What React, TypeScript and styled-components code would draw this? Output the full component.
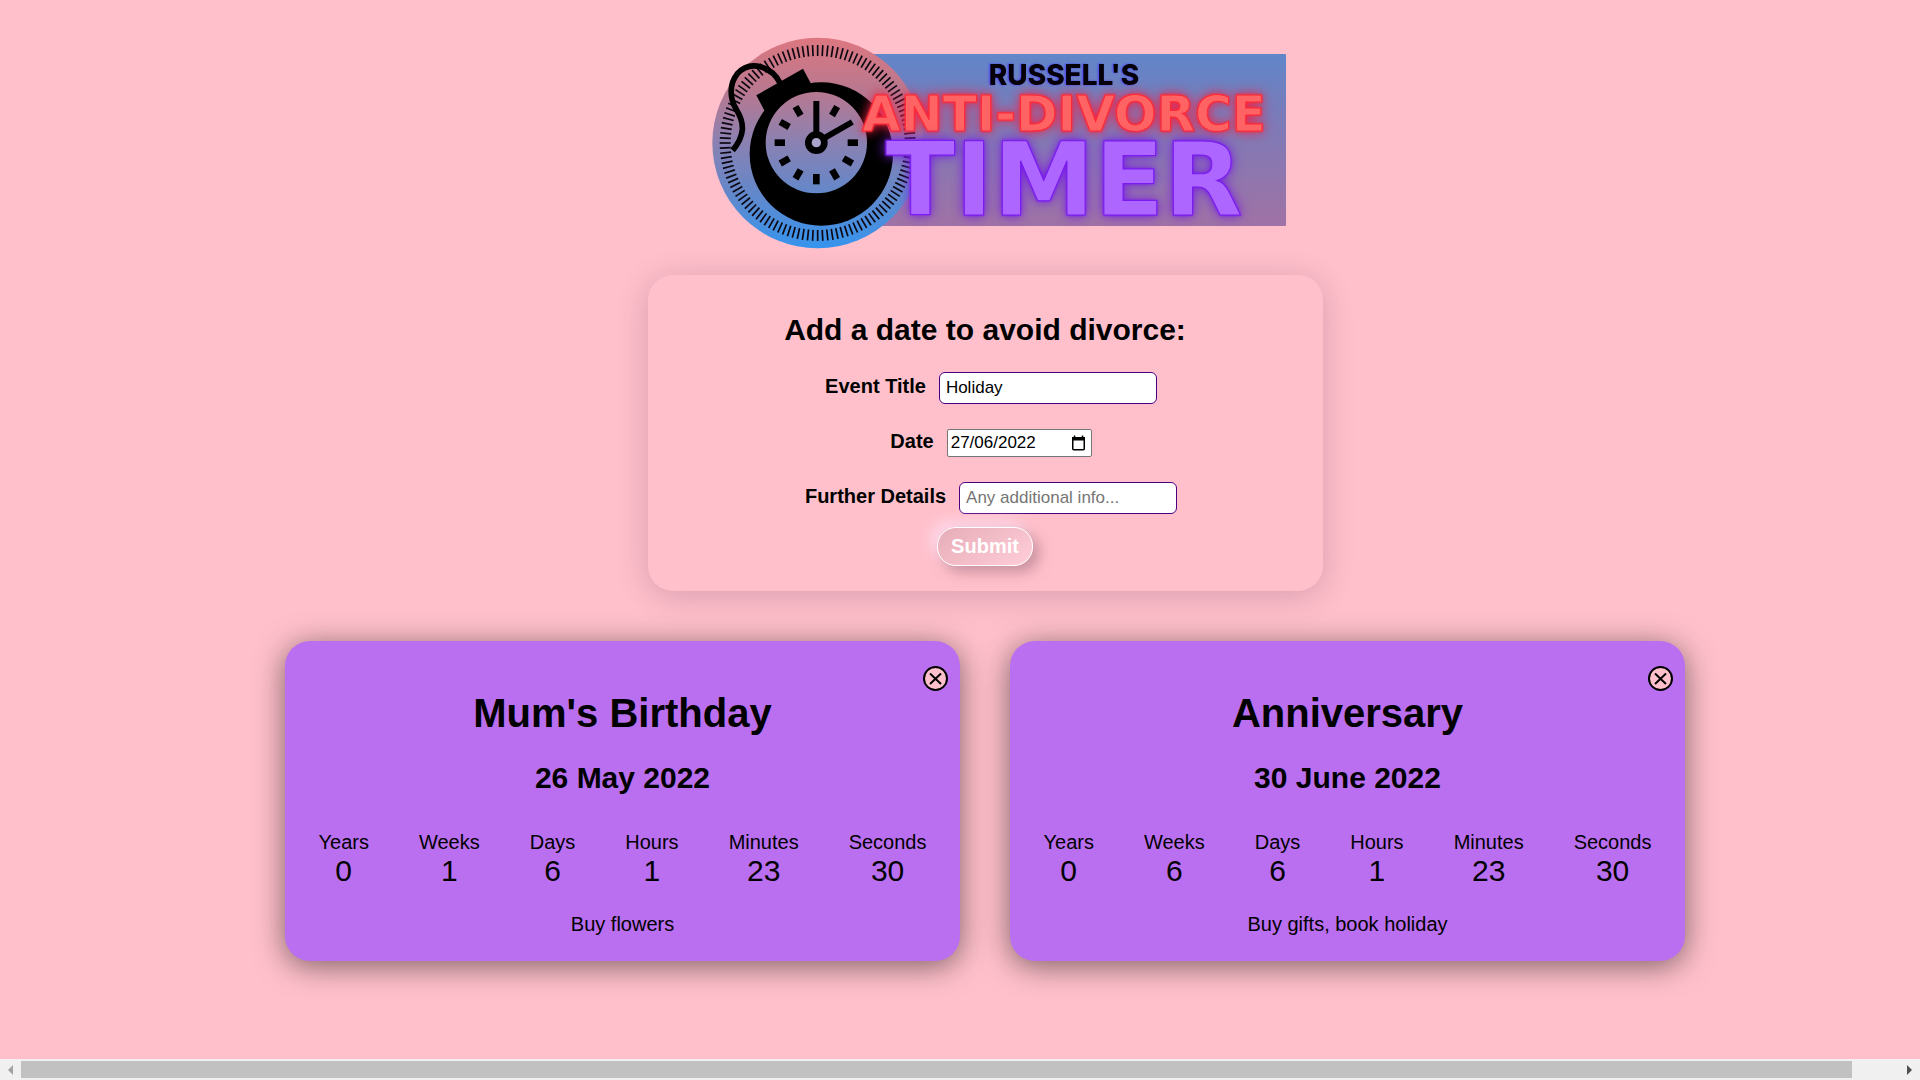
import React, { useState } from "react";
import styled, { createGlobalStyle } from "styled-components";

const GlobalStyle = createGlobalStyle`
  *, *::before, *::after { box-sizing: border-box; }
  body {
    margin: 0;
    background: #ffc0cb;
    color: #000;
    font-family: "Liberation Sans", Arial, sans-serif;
    font-size: 20px;
  }
`;

const Page = styled.div`
  display: flex;
  flex-direction: column;
  min-height: 100vh;
`;

const Main = styled.main`
  flex: 1;
  display: flex;
  flex-direction: column;
  align-items: center;
  padding: 25px 0 25px 50px;
`;

const LogoSvg = styled.svg`
  display: block;
  width: 602px;
  max-width: 100%;
  height: 250px;
`;

const LogoName = styled.text`
  font: 800 28px Inter, sans-serif;
  fill: #050008;
  text-anchor: middle;
  filter: drop-shadow(-1px 0 1px #4a3cff);
`;

const NeonText = styled.text<{ $size: number; $fill: string; $edge: string; $glow: string }>`
  font: 700 ${(p) => p.$size}px "DejaVu Sans", sans-serif;
  fill: ${(p) => p.$fill};
  stroke: ${(p) => p.$edge};
  stroke-width: 1px;
  text-anchor: middle;
  filter: drop-shadow(0 0 1px ${(p) => p.$edge}) drop-shadow(0 0 6px ${(p) => p.$glow});
`;

const FormCard = styled.form`
  display: flex;
  flex-direction: column;
  align-items: center;
  width: 675px;
  max-width: 100%;
  padding: 37px 25px 25px;
  border-radius: 25px;
  box-shadow: 0 5px 32px rgba(60, 20, 60, 0.2);
`;

const FormTitle = styled.h2`
  margin: 0 0 25px;
  font-size: 30px;
  line-height: 35px;
`;

const Fields = styled.div`
  display: flex;
  flex-direction: column;
  align-items: center;
  gap: 25px;
  margin-bottom: 13px;
`;

const Field = styled.div`
  display: flex;
  align-items: center;
`;

const Label = styled.label`
  margin: 0 13px 0 12px;
  padding-bottom: 4px;
  font-weight: 700;
  line-height: 24px;
`;

const TextInput = styled.input`
  width: 218px;
  height: 32px;
  padding: 0 6px;
  border: 1px solid #4b0082;
  border-radius: 6px;
  background: #fff;
  color: #000;
  font: 17px "Liberation Sans", Arial, sans-serif;
  &::placeholder { color: #757575; }
`;

const DateBox = styled.div`
  display: flex;
  align-items: center;
  width: 145px;
  height: 28px;
  padding: 0 5px 0 3px;
  border: 1px solid #767676;
  border-radius: 2px;
  background: #fff;
`;

const DateInput = styled.input`
  flex: 1;
  min-width: 0;
  padding: 0;
  border: 0;
  background: none;
  font: 17px "Liberation Sans", Arial, sans-serif;
`;

const IconButton = styled.button`
  display: flex;
  padding: 0;
  border: 0;
  background: none;
  cursor: pointer;
`;

const Submit = styled.button`
  height: 39px;
  padding: 0 13px;
  border: 1px solid #fff;
  border-radius: 19px;
  background: linear-gradient(145deg, #e6adb7, #ffcdd9);
  box-shadow: 6px 6px 14px rgba(160, 110, 125, 0.6), -6px -6px 14px rgba(255, 225, 245, 0.8);
  color: #fff;
  font: 700 20px "Liberation Sans", Arial, sans-serif;
`;

const Events = styled.section`
  display: flex;
  flex-wrap: wrap;
  justify-content: center;
  gap: 50px;
  margin-top: 50px;
`;

const EventCard = styled.article`
  display: flex;
  flex-direction: column;
  align-items: center;
  width: 675px;
  padding: 25px 12px;
  border-radius: 25px;
  background: #ba6ff0;
  box-shadow: 0 5px 30px rgba(0, 0, 0, 0.5);
`;

const Dismiss = styled(IconButton)`
  align-self: flex-end;
`;

const EventTitle = styled.h1`
  margin: 0 0 25px;
  font-size: 40px;
  line-height: 45px;
`;

const EventDate = styled.h2`
  margin: 0 0 36px;
  font-size: 30px;
  line-height: 34px;
`;

const Countdown = styled.dl`
  display: flex;
  justify-content: center;
  gap: 50px;
  margin: 0 0 25px;
`;

const Unit = styled.div`
  text-align: center;
`;

const UnitName = styled.dt`
  line-height: 23px;
`;

const UnitValue = styled.dd`
  margin: 0;
  font-size: 30px;
  line-height: 34px;
`;

const Note = styled.p`
  margin: 0;
  line-height: 23px;
`;

const ScrollBar = styled.div`
  display: flex;
  align-items: center;
  height: 21px;
  background: #f0f0f0;
`;

const ScrollArrow = styled(IconButton)`
  flex: none;
  justify-content: center;
  width: 21px;
`;

const ScrollTrack = styled.div`
  flex: 1;
`;

const ScrollThumb = styled.div`
  width: 97.5%;
  height: 17px;
  background: #c1c1c1;
`;

const ticks = Array.from({ length: 120 }, (_, i) => i * 3);
const hourMarks = [30, 90, 120, 150, 180, 210, 240, 270, 300, 330];

function Logo() {
  return (
    <LogoSvg viewBox="0 0 602 250" role="img" aria-label="Russell's Anti-Divorce Timer">
      <defs>
        <linearGradient id="dial" gradientUnits="userSpaceOnUse" x1="0" y1="38" x2="0" y2="670">
          <stop offset="0" stopColor="#dd7780" />
          <stop offset="0.25" stopColor="#b9788f" />
          <stop offset="0.5" stopColor="#8a81b2" />
          <stop offset="0.72" stopColor="#6687c8" />
          <stop offset="1" stopColor="#3594ee" />
        </linearGradient>
        <linearGradient id="panel" x1="0" y1="0" x2="0" y2="1">
          <stop offset="0" stopColor="#6086c9" />
          <stop offset="0.35" stopColor="#7a7bb9" />
          <stop offset="1" stopColor="#a072a5" />
        </linearGradient>
      </defs>
      <rect x="140" y="29" width="462" height="172" rx="1" fill="url(#panel)" />
      <g transform="scale(0.33333)">
        <circle cx="401" cy="354" r="316" fill="url(#dial)" />
        <g stroke="#0b0610" strokeWidth="5">
          {ticks.map((a) => (
            <line key={a} x1="401" y1="60" x2="401" y2="93" transform={`rotate(${a} 401 354)`} />
          ))}
        </g>
        <path
          d="M288 174 C264 126 200 102 160 146 C134 178 138 222 156 252 C184 296 182 332 146 376"
          fill="none"
          stroke="#000"
          strokeWidth="17"
        />
        <path d="M217 211 L357 131 L382 178 L242 258 Z" fill="#000" />
        <circle cx="412" cy="387" r="215" fill="#000" />
        <circle cx="397" cy="353" r="152" fill="url(#dial)" />
        {hourMarks.map((a) => (
          <rect key={a} x="387" y="228" width="20" height="31" transform={`rotate(${a} 397 353)`} />
        ))}
        <path d="M397 353 V228 M397 353 L505 291" stroke="#000" strokeWidth="18" />
        <circle cx="397" cy="353" r="24" fill="#aba4cc" stroke="#000" strokeWidth="20" />
      </g>
      <LogoName x="380" y="60">RUSSELL'S</LogoName>
      <NeonText x="380" y="106" $size={50} $fill="#ff6363" $edge="#ff2a36" $glow="#f02048">
        ANTI-DIVORCE
      </NeonText>
      <NeonText x="380" y="190" $size={102} $fill="#ad66ff" $edge="#7a1cf0" $glow="#7a1ee0">
        TIMER
      </NeonText>
    </LogoSvg>
  );
}

type EventItem = { title: string; date: string; left: number[]; note: string };

const initialEvents: EventItem[] = [
  { title: "Mum's Birthday", date: "26 May 2022", left: [0, 1, 6, 1, 23, 30], note: "Buy flowers" },
  { title: "Anniversary", date: "30 June 2022", left: [0, 6, 6, 1, 23, 30], note: "Buy gifts, book holiday" },
];

const units = ["Years", "Weeks", "Days", "Hours", "Minutes", "Seconds"];

export default function App() {
  const [events, setEvents] = useState(initialEvents);
  return (
    <Page>
      <GlobalStyle />
      <Main>
        <Logo />
        <FormCard onSubmit={(e) => e.preventDefault()}>
          <FormTitle>Add a date to avoid divorce:</FormTitle>
          <Fields>
            <Field>
              <Label htmlFor="title">Event Title</Label>
              <TextInput id="title" type="text" defaultValue="Holiday" />
            </Field>
            <Field>
              <Label htmlFor="date">Date</Label>
              <DateBox>
                <DateInput id="date" type="text" defaultValue="27/06/2022" />
                <IconButton type="button" aria-label="Open calendar">
                  <svg width="15" height="17" viewBox="0 0 15 17">
                    <path d="M3.5 0.5v2M11.5 0.5v2" stroke="#000" strokeWidth="1.5" />
                    <rect x="1.75" y="2.75" width="11.5" height="12" rx="1" fill="none" stroke="#000" strokeWidth="1.5" />
                    <path d="M1 2h13v3.5H1z" />
                  </svg>
                </IconButton>
              </DateBox>
            </Field>
            <Field>
              <Label htmlFor="details">Further Details</Label>
              <TextInput id="details" type="text" placeholder="Any additional info..." />
            </Field>
          </Fields>
          <Submit type="submit">Submit</Submit>
        </FormCard>
        <Events>
          {events.map((ev) => (
            <EventCard key={ev.title}>
              <Dismiss
                type="button"
                aria-label={`Remove ${ev.title}`}
                onClick={() => setEvents(events.filter((other) => other !== ev))}
              >
                <svg width="25" height="25" viewBox="0 0 25 25">
                  <circle cx="12.5" cy="12.5" r="11.5" fill="#ffc0cb" stroke="#000" strokeWidth="2" />
                  <path d="M7 7.5 L18 18 M18 7.5 L7 18" stroke="#000" strokeWidth="2" />
                </svg>
              </Dismiss>
              <EventTitle>{ev.title}</EventTitle>
              <EventDate>{ev.date}</EventDate>
              <Countdown>
                {units.map((unit, i) => (
                  <Unit key={unit}>
                    <UnitName>{unit}</UnitName>
                    <UnitValue>{ev.left[i]}</UnitValue>
                  </Unit>
                ))}
              </Countdown>
              <Note>{ev.note}</Note>
            </EventCard>
          ))}
        </Events>
      </Main>
      <ScrollBar>
        <ScrollArrow type="button" aria-label="Scroll left">
          <svg width="5" height="10" viewBox="0 0 5 10">
            <path d="M5 0v10L0 5z" fill="#a3a3a3" />
          </svg>
        </ScrollArrow>
        <ScrollTrack>
          <ScrollThumb />
        </ScrollTrack>
        <ScrollArrow type="button" aria-label="Scroll right">
          <svg width="5" height="10" viewBox="0 0 5 10">
            <path d="M0 0v10l5-5z" fill="#505050" />
          </svg>
        </ScrollArrow>
      </ScrollBar>
    </Page>
  );
}
